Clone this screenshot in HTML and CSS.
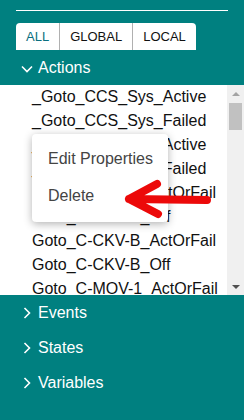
FILE: index.html
```html
<!DOCTYPE html>
<html lang="en">
<head>
    <meta charset="UTF-8">
    <meta name="viewport" content="width=device-width, initial-scale=1.0">
    <title>Project Tree</title>
    <link rel="stylesheet" href="styles.css">
</head>
<body>

    <div id="panel">
        <div class="rule"></div>

        <div class="tabs">
            <button class="tab active">ALL</button>
            <button class="tab">GLOBAL</button>
            <button class="tab">LOCAL</button>
        </div>

        <div class="section open">
            <svg class="chev" width="12" height="8" viewBox="0 0 12 8"><path d="M1 1.5 L6 6.5 L11 1.5" fill="none" stroke="#fff" stroke-width="1.6"/></svg>
            <span>Actions</span>
        </div>

        <div class="list-box">
            <ul class="items">
                <li>_Goto_CCS_Sys_Active</li>
                <li>_Goto_CCS_Sys_Failed</li>
                <li>_Goto_CCS_Sys_Active</li>
                <li>_Goto_CCS_Sys_Failed</li>
                <li>Goto_C-CKV-A_ActOrFail</li>
                <li>Goto_C-CKV-A_Off</li>
                <li>Goto_C-CKV-B_ActOrFail</li>
                <li>Goto_C-CKV-B_Off</li>
                <li>Goto_C-MOV-1_ActOrFail</li>
            </ul>
            <div class="scrollbar">
                <div class="arrow-up"></div>
                <div class="track"><div class="thumb"></div></div>
                <div class="arrow-down"></div>
            </div>

            <div class="menu">
                <div class="menu-item">Edit Properties</div>
                <div class="menu-item">Delete</div>
            </div>

            <svg class="pointer" width="100" height="44" viewBox="0 0 100 44">
                <path d="M86 21 L8 20 M36 5 L8 20 L37 35" fill="none" stroke="#ec0909" stroke-width="8" stroke-linecap="round" stroke-linejoin="round"/>
            </svg>
        </div>

        <div class="section">
            <svg class="chev" width="8" height="12" viewBox="0 0 8 12"><path d="M1.5 1 L6.5 6 L1.5 11" fill="none" stroke="#fff" stroke-width="1.6"/></svg>
            <span>Events</span>
        </div>
        <div class="section">
            <svg class="chev" width="8" height="12" viewBox="0 0 8 12"><path d="M1.5 1 L6.5 6 L1.5 11" fill="none" stroke="#fff" stroke-width="1.6"/></svg>
            <span>States</span>
        </div>
        <div class="section">
            <svg class="chev" width="8" height="12" viewBox="0 0 8 12"><path d="M1.5 1 L6.5 6 L1.5 11" fill="none" stroke="#fff" stroke-width="1.6"/></svg>
            <span>Variables</span>
        </div>
    </div>

</body>
</html>
```

FILE: styles.css
```css
body {
    margin: 0;
    font-family: "Liberation Sans", Arial, sans-serif;
    background-color: #008080;
    height: 100vh;
    overflow: hidden;
}
#panel {
    padding-top: 10px;
}
.rule {
    margin: 0 16px;
    border-top: 1px solid #fff;
}
.tabs {
    display: flex;
    margin: 12px 0 0 16px;
}
.tab {
    height: 27px;
    padding: 0 10px;
    font-family: inherit;
    font-size: 13px;
    color: #111;
    background-color: #fff;
    border: none;
    border-left: 1px solid #b0b0b0;
}
.tab:first-child {
    border-left: none;
    border-top-left-radius: 4px;
}
.tab:last-child {
    border-top-right-radius: 4px;
}
.tab.active {
    color: #0a6f80;
}
.section {
    display: flex;
    align-items: center;
    height: 35px;
    color: #fff;
    font-size: 16px;
}
.section .chev {
    width: 22px;
    margin-left: 16px;
    flex-shrink: 0;
}
.section span {
    margin-left: 0;
}
.section.open .chev {
    margin-top: 2px;
}
.list-box {
    position: relative;
    display: flex;
    height: 210px;
    background-color: #fff;
}
.items {
    flex: 1;
    list-style: none;
    margin: 0;
    padding: 0 0 0 32px;
    overflow: hidden;
}
.items li {
    height: 24px;
    line-height: 24px;
    font-size: 16px;
    color: #111;
    white-space: nowrap;
}
.scrollbar {
    width: 17px;
    display: flex;
    flex-direction: column;
    background-color: #f0f0f0;
}
.track {
    flex: 1;
    padding: 1px 2px;
}
.thumb {
    height: 27px;
    background-color: #c1c1c1;
}
.arrow-up,
.arrow-down {
    height: 17px;
    display: flex;
    justify-content: center;
    align-items: center;
}
.arrow-up::before {
    content: "";
    border: 4px solid transparent;
    border-bottom: 4px solid #a3a3a3;
    border-top: none;
}
.arrow-down::before {
    content: "";
    border: 4px solid transparent;
    border-top: 4px solid #505050;
    border-bottom: none;
}
.menu {
    position: absolute;
    left: 32px;
    top: 49px;
    width: 136px;
    padding: 6px 0 8px;
    background-color: #fff;
    border-radius: 4px;
    box-shadow: 0 2px 8px rgba(0, 0, 0, 0.3);
}
.menu-item {
    height: 37px;
    line-height: 37px;
    padding-left: 16px;
    font-size: 16px;
    color: #444;
}
.pointer {
    position: absolute;
    left: 121px;
    top: 94px;
}
```
